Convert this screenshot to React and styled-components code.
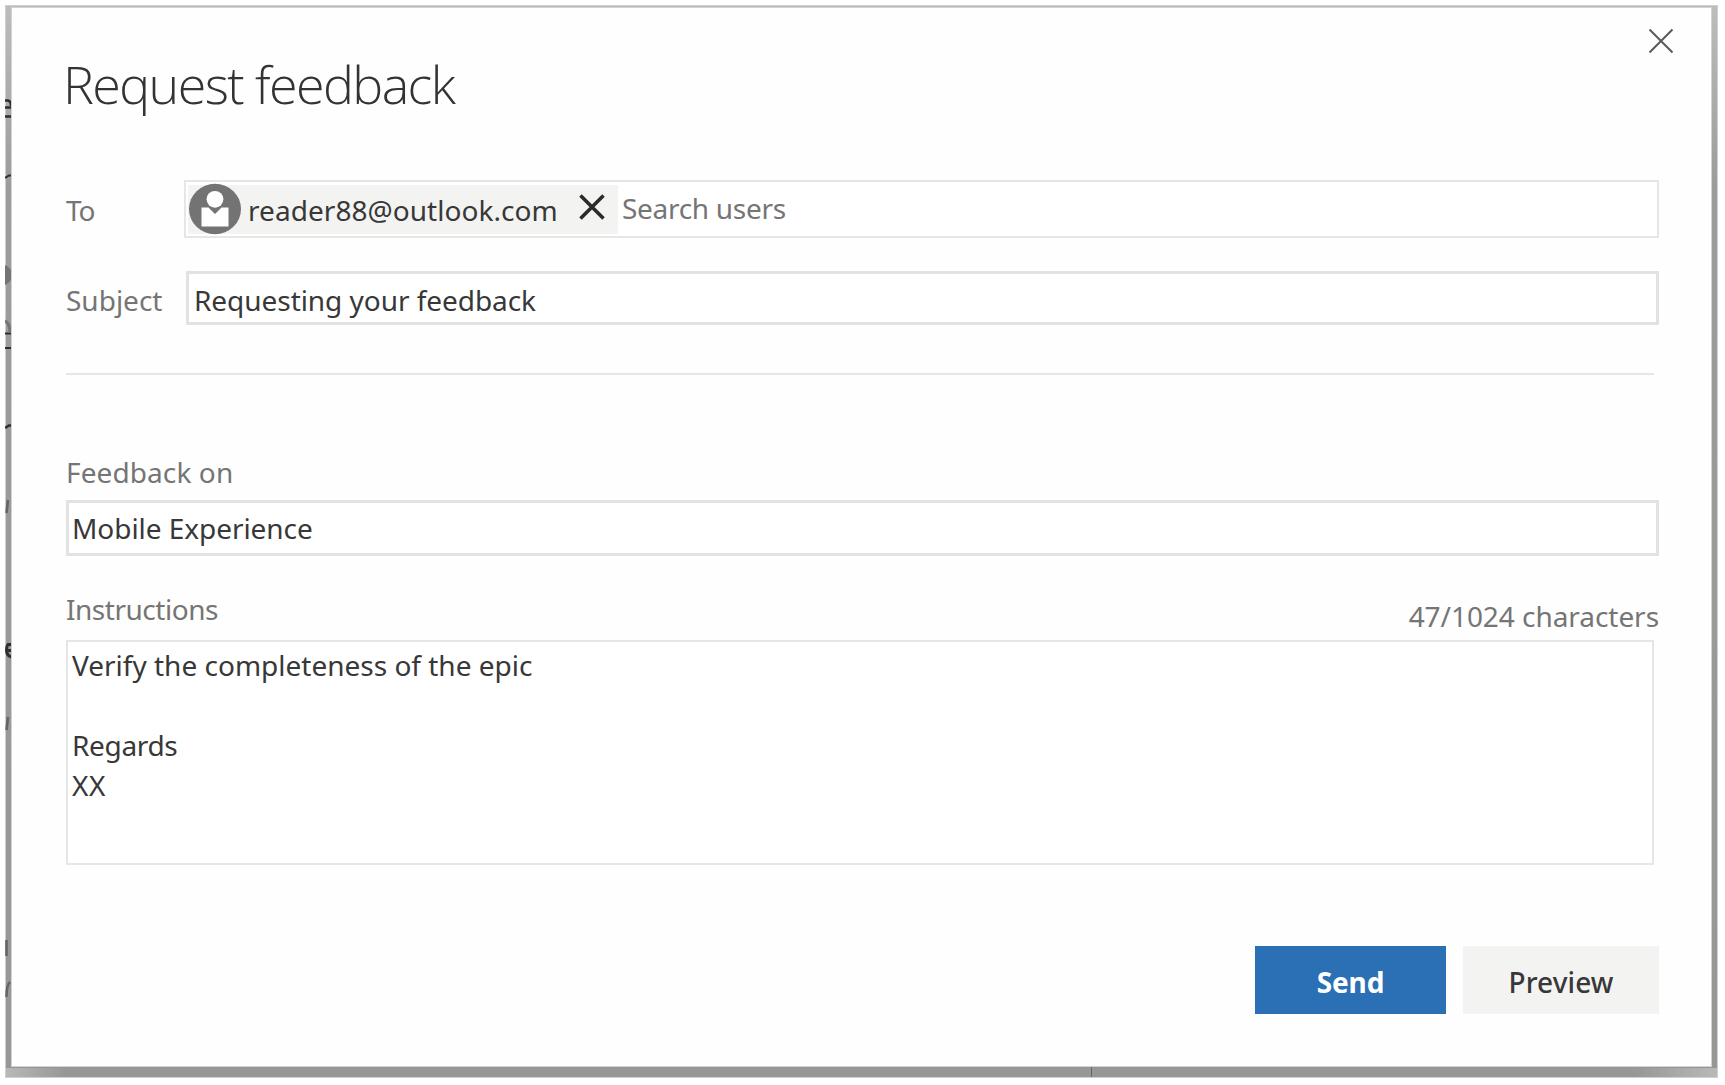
import React from "react";
import styled, { createGlobalStyle } from "styled-components";

const Global = createGlobalStyle`
  * { box-sizing: border-box; }
  body {
    margin: 0;
    background: #fff;
    font-family: "Noto Sans", "Open Sans", sans-serif;
    font-size: 28px;
    color: #383838;
  }
  button { font: inherit; }
`;

const Page = styled.div`
  width: 1725px;
  height: 1085px;
  padding: 5px 7px 7px 5px;
`;

const Backdrop = styled.div`
  position: relative;
  width: 1713px;
  height: 1073px;
  padding: 3px 7px 12px 7px;
  background:
    linear-gradient(90deg, #b9b9b9, rgba(153, 153, 153, 0) 60px, rgba(153, 153, 153, 0) 1630px, #b9b9b9) bottom / 100% 10px no-repeat,
    linear-gradient(#bdbdbd 0, #b9b9b9 20px, #9c9c9c 180px, #979797 100%);
  box-shadow: inset 0 0 0 1px #cfcfcf;
`;

const Behind = styled.svg`
  position: absolute;
  left: 0;
  top: 0;
`;

const Dialog = styled.main`
  position: relative;
  display: flex;
  flex-direction: column;
  width: 1699px;
  height: 1058px;
  padding: 20px 52px 0 54px;
  background: #fefefe;
  box-shadow: 0 0 0 1px #d2d2d2;
`;

const Header = styled.header`
  display: flex;
  justify-content: space-between;
  align-items: flex-start;
  height: 90px;
  margin-right: -15px;
`;

const Title = styled.h1`
  margin: 21px 0 0 -3px;
  font-family: "Open Sans", "Noto Sans", sans-serif;
  font-size: 52px;
  line-height: 70px;
  font-weight: 300;
  letter-spacing: -1.6px;
  color: #333;
`;

const IconButton = styled.button`
  display: flex;
  padding: 0;
  border: 0;
  background: none;
  color: ${(p) => p.$color};
`;

const FieldRow = styled.div`
  display: flex;
  align-items: center;
  height: ${(p) => p.$height}px;
  margin-top: ${(p) => p.$top}px;
`;

const Label = styled.label`
  flex: none;
  width: ${(p) => (p.$width ? `${p.$width}px` : "auto")};
  padding-top: ${(p) => p.$shift || 0}px;
  line-height: 38px;
  letter-spacing: ${(p) => p.$spacing || 0}px;
  white-space: nowrap;
  color: #757575;
`;

const Box = styled.div`
  display: flex;
  align-items: center;
  flex: 1;
  height: 100%;
  padding: ${(p) => p.$padding};
  border: ${(p) => p.$border}px solid ${(p) => (p.$border > 2 ? "#e2e2e2" : "#e6e6e6")};
  background: #fff;
`;

const Value = styled.span`
  line-height: 38px;
  letter-spacing: ${(p) => p.$spacing || 0}px;
  white-space: nowrap;
  color: ${(p) => (p.$muted ? "#757575" : "#383838")};
`;

const Placeholder = styled(Value)`
  padding-bottom: 2px;
`;

const Chip = styled.div`
  display: flex;
  align-items: center;
  width: 430px;
  height: 49px;
  margin-right: 4px;
  background: #f3f3f2;
`;

const ChipName = styled(Value)`
  width: 331px;
  margin-left: 7px;
  padding-top: 2px;
`;

const ChipRemove = styled(IconButton)`
  margin-bottom: 5px;
`;

const Divider = styled.hr`
  flex: none;
  width: 1588px;
  height: 2px;
  margin: 48px 0 0;
  border: 0;
  background: #e6e6e6;
`;

const FeedbackField = styled.section`
  display: flex;
  flex-direction: column;
  gap: 9px;
  height: 103px;
  margin-top: 78px;
`;

const InstructionsHead = styled.div`
  display: flex;
  justify-content: space-between;
  height: 50px;
  margin-top: 34px;
`;

const Counter = styled.span`
  padding-top: 7px;
  line-height: 38px;
  letter-spacing: -0.05px;
  color: #757575;
`;

const Instructions = styled.div`
  width: 1588px;
  height: 225px;
  padding: 3px 4px;
  border: 2px solid #e6e6e6;
  background: #fff;
`;

const Line = styled.p`
  margin: 0;
  height: 40px;
  line-height: 40px;
  letter-spacing: ${(p) => p.$spacing || 0}px;
`;

const Actions = styled.footer`
  display: flex;
  justify-content: flex-end;
  gap: 17px;
  height: 68px;
  margin-top: 81px;
`;

const Button = styled.button`
  width: ${(p) => (p.$primary ? 191 : 196)}px;
  height: 68px;
  padding: 3px 0 0;
  border: 0;
  background: ${(p) => (p.$primary ? "#2b6fb5" : "#f3f3f2")};
  color: ${(p) => (p.$primary ? "#fff" : "#383838")};
  font-weight: ${(p) => (p.$primary ? 700 : 500)};
  line-height: 38px;
  letter-spacing: ${(p) => (p.$primary ? -0.1 : 0.1)}px;
`;

function Cross({ size, stroke }) {
  return (
    <svg width={size} height={size} viewBox={`0 0 ${size} ${size}`} aria-hidden="true">
      <path
        d={`M1.5 1.5 L${size - 1.5} ${size - 1.5} M${size - 1.5} 1.5 L1.5 ${size - 1.5}`}
        stroke="currentColor"
        strokeWidth={stroke}
        fill="none"
      />
    </svg>
  );
}

function Avatar() {
  return (
    <svg width="53" height="52" viewBox="-1 0 53 52" aria-hidden="true">
      <ellipse cx="26" cy="26" rx="26" ry="25.2" fill="#737373" />
      <path d="M12.5 24.5 H19.5 L26 31 L32.5 24.5 H39.5 V43.5 H12.5 Z" fill="#fff" />
      <circle cx="26" cy="16.3" r="8.4" fill="#fff" />
    </svg>
  );
}

function PageEdge() {
  return (
    <Behind width="1713" height="1073" viewBox="0 0 1713 1073" aria-hidden="true">
      <g fill="none" stroke="#2e2e2e" strokeWidth="2.6">
        <path d="M0 95.5 H3 Q6 96 6 101 M0 102.5 H7 M0 111.5 H6" />
        <path d="M0 173 L4 170.5 H7" strokeWidth="2" />
        <path d="M0 328.5 H7 M0 343 H6" strokeWidth="2" />
        <path d="M0 423 L4 420.5 H7" strokeWidth="2.4" />
        <path d="M7 639.5 H3 Q1.5 641 1.5 645 Q1.5 651 7 652 M1.5 645.5 H7" strokeWidth="3" />
      </g>
      <path d="M0 260 Q7 263 7 270 Q7 277 0 280 Z" fill="#747474" />
      <path d="M0 316 Q5 318 5 328" fill="none" stroke="#747474" strokeWidth="3" />
      <g fill="none" stroke="#656565" strokeWidth="2.6">
        <path d="M3 495 L1.5 508" />
        <path d="M3 712 L1.5 725" />
        <path d="M1.5 935 V951" />
        <path d="M5 977 Q1.5 980 1.5 992" />
        <path d="M1086.5 1062 V1072" strokeWidth="1" />
      </g>
    </Behind>
  );
}

export default function App() {
  return (
    <Page>
      <Global />
      <Backdrop>
        <PageEdge />
        <Dialog>
          <Header>
            <Title>Request feedback</Title>
            <IconButton aria-label="Close" $color="#5a5a5a">
              <Cross size={26} stroke={2} />
            </IconButton>
          </Header>

          <FieldRow $top={62} $height={58}>
            <Label $width={118} $shift={1} $spacing={-1.2}>To</Label>
            <Box $border={2} $padding="0 2px">
              <Chip>
                <Avatar />
                <ChipName $spacing={0.05}>reader88@outlook.com</ChipName>
                <ChipRemove aria-label="Remove" $color="#2b2b2b">
                  <Cross size={26} stroke={3.6} />
                </ChipRemove>
              </Chip>
              <Placeholder $muted $spacing={-0.3}>Search users</Placeholder>
            </Box>
          </FieldRow>

          <FieldRow $top={33} $height={54}>
            <Label $width={120} $shift={3}>Subject</Label>
            <Box $border={3} $padding="3px 5px 0">
              <Value $spacing={-0.05}>Requesting your feedback</Value>
            </Box>
          </FieldRow>

          <Divider />

          <FeedbackField>
            <Label $spacing={0.1}>Feedback on</Label>
            <Box $border={3} $padding="0 3px">
              <Value $spacing={-0.05}>Mobile Experience</Value>
            </Box>
          </FeedbackField>

          <InstructionsHead>
            <Label $spacing={-0.47}>Instructions</Label>
            <Counter>47/1024 characters</Counter>
          </InstructionsHead>
          <Instructions>
            <Line>Verify the completeness of the epic</Line>
            <Line />
            <Line $spacing={-0.35}>Regards</Line>
            <Line $spacing={0.6}>XX</Line>
          </Instructions>

          <Actions>
            <Button $primary>Send</Button>
            <Button>Preview</Button>
          </Actions>
        </Dialog>
      </Backdrop>
    </Page>
  );
}
